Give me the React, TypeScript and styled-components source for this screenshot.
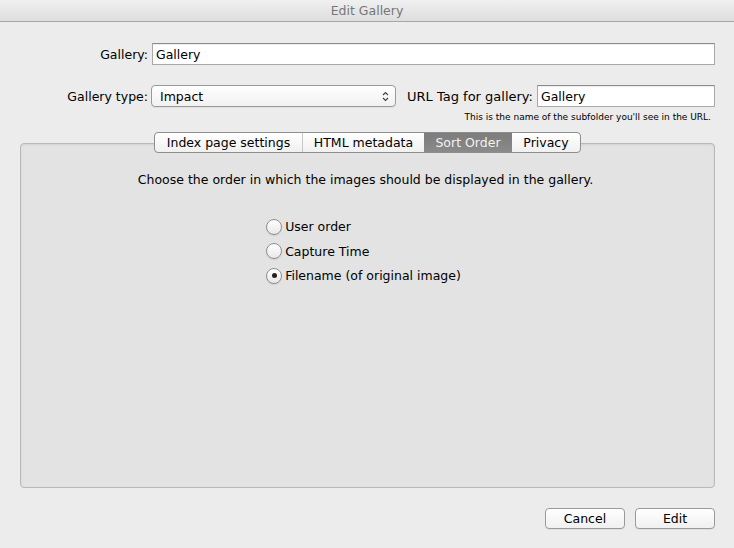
import styled, {createGlobalStyle} from "styled-components";

const Global = createGlobalStyle`
  html, body {
    margin: 0;
    padding: 0;
    background: #ececec;
  }
  * {
    box-sizing: border-box;
  }
`;

const Window = styled.div`
  width: 734px;
  height: 548px;
  background: #ececec;
  font-family: "DejaVu Sans", "Liberation Sans", sans-serif;
  font-size: 12px;
  color: #000;
  display: flex;
  flex-direction: column;
`;

const TitleBar = styled.div`
  height: 22px;
  background: linear-gradient(#f0f0f0, #dedede);
  border-bottom: 1px solid #a6a6a6;
  display: flex;
  align-items: center;
  justify-content: center;
  color: #777;
  font-size: 12.5px;
`;

const Body = styled.div`
  flex: 1;
  display: flex;
  flex-direction: column;
  padding: 20px 19px 0 20px;
`;

const Row = styled.div<{top: number}>`
  display: flex;
  align-items: center;
  margin-top: ${(p) => p.top}px;
  height: 22px;
`;

const Label = styled.label<{w?: number; push?: boolean}>`
  width: ${(p) => (p.w ? p.w + "px" : "auto")};
  ${(p) => (p.push ? "margin-left: auto;" : "")}
  text-align: right;
  padding-right: 4px;
  white-space: nowrap;
  font-size: 12.5px;
`;

const UrlLabel = styled(Label)`
  font-size: 13px;
`;

const TextInput = styled.div<{w?: number}>`
  ${(p) => (p.w ? `width: ${p.w}px;` : "flex: 1;")}
  height: 22px;
  background: #fff;
  border: 1px solid #a9a9a9;
  border-top-color: #8c8c8c;
  box-shadow: inset 0 1px 1px rgba(0, 0, 0, 0.08);
  display: flex;
  align-items: center;
  padding-left: 3px;
  font-size: 12.5px;
`;

const Select = styled.div`
  width: 245px;
  height: 22px;
  margin-left: -1px;
  border: 1px solid #9a9a9a;
  border-radius: 4px;
  background: linear-gradient(#ffffff, #f1f1f1);
  box-shadow: 0 1px 0 rgba(0, 0, 0, 0.05);
  display: flex;
  align-items: center;
  padding-left: 8px;
  justify-content: space-between;
  padding-right: 6px;
  font-size: 12.5px;
`;

const Arrows = styled.svg`
  width: 7px;
  height: 11px;
`;

const Hint = styled.div`
  text-align: right;
  font-size: 9px;
  padding-right: 4px;
  margin-top: 5px;
`;

const Panel = styled.div`
  margin-top: 21px;
  height: 345px;
  border: 1px solid #b8b8b8;
  border-radius: 4px;
  background: #e3e3e3;
  box-shadow: inset 0 1px 2px rgba(0, 0, 0, 0.08);
  display: flex;
  flex-direction: column;
  align-items: center;
`;

const Tabs = styled.div`
  display: flex;
  margin-top: -12px;
  height: 21px;
  border: 1px solid #8e8e8e;
  border-radius: 4px;
  background: linear-gradient(#ffffff, #f0f0f0);
  overflow: hidden;
`;

const Tab = styled.div<{active?: boolean; w: number; sep?: boolean}>`
  width: ${(p) => p.w}px;
  display: flex;
  align-items: center;
  justify-content: center;
  font-size: 12.5px;
  color: ${(p) => (p.active ? "#f2f2f2" : "#000")};
  background: ${(p) => (p.active ? "linear-gradient(#7c7c7c, #8a8a8a)" : "transparent")};
  border-left: ${(p) => (p.sep ? "1px solid #c8c8c8" : "none")};
`;

const Description = styled.div`
  margin-top: 19px;
  font-size: 12.5px;
  margin-left: -4px;
`;

const RadioGroup = styled.div`
  margin-top: 31px;
  margin-left: -8px;
  display: flex;
  flex-direction: column;
  gap: 7.5px;
`;

const RadioRow = styled.div`
  display: flex;
  align-items: center;
  gap: 3px;
  font-size: 12.5px;
  height: 17px;
`;

const Radio = styled.span<{checked?: boolean}>`
  width: 16px;
  height: 16px;
  border-radius: 50%;
  border: 1px solid #8f8f8f;
  background: linear-gradient(#ffffff, #e8e8e8);
  box-shadow: 0 1px 1px rgba(0, 0, 0, 0.1);
  display: flex;
  align-items: center;
  justify-content: center;
  &::after {
    content: "";
    width: 5px;
    height: 5px;
    border-radius: 50%;
    background: ${(p) => (p.checked ? "#222" : "transparent")};
  }
`;

const Footer = styled.div`
  display: flex;
  justify-content: flex-end;
  gap: 10px;
  margin-top: 20px;
`;

const Button = styled.div`
  width: 80px;
  height: 21px;
  border: 1px solid #9a9a9a;
  border-radius: 4px;
  background: linear-gradient(#ffffff, #f0f0f0);
  box-shadow: 0 1px 0 rgba(0, 0, 0, 0.05);
  display: flex;
  align-items: center;
  justify-content: center;
  font-size: 12.5px;
`;

const tabs = [
  {label: "Index page settings", w: 147},
  {label: "HTML metadata", w: 122},
  {label: "Sort Order", w: 88, active: true},
  {label: "Privacy", w: 68},
];

const options = [
  {label: "User order"},
  {label: "Capture Time"},
  {label: "Filename (of original image)", checked: true},
];

export default function App() {
  return (
    <Window>
      <Global />
      <TitleBar>Edit Gallery</TitleBar>
      <Body>
        <Row top={1}>
          <Label w={132}>Gallery:</Label>
          <TextInput>Gallery</TextInput>
        </Row>
        <Row top={20}>
          <Label w={132}>Gallery type:</Label>
          <Select>
            Impact
            <Arrows viewBox="0 0 7 11">
              <path d="M1 4 L3.5 1.5 L6 4" fill="none" stroke="#444" strokeWidth="1.2" />
              <path d="M1 7 L3.5 9.5 L6 7" fill="none" stroke="#444" strokeWidth="1.2" />
            </Arrows>
          </Select>
          <UrlLabel push>URL Tag for gallery:</UrlLabel>
          <TextInput w={178}>Gallery</TextInput>
        </Row>
        <Hint>This is the name of the subfolder you'll see in the URL.</Hint>
        <Panel>
          <Tabs>
            {tabs.map((t, i) => (
              <Tab key={t.label} w={t.w} active={t.active} sep={i === 1}>
                {t.label}
              </Tab>
            ))}
          </Tabs>
          <Description>
            Choose the order in which the images should be displayed in the gallery.
          </Description>
          <RadioGroup>
            {options.map((o) => (
              <RadioRow key={o.label}>
                <Radio checked={o.checked} />
                {o.label}
              </RadioRow>
            ))}
          </RadioGroup>
        </Panel>
        <Footer>
          <Button>Cancel</Button>
          <Button>Edit</Button>
        </Footer>
      </Body>
    </Window>
  );
}
